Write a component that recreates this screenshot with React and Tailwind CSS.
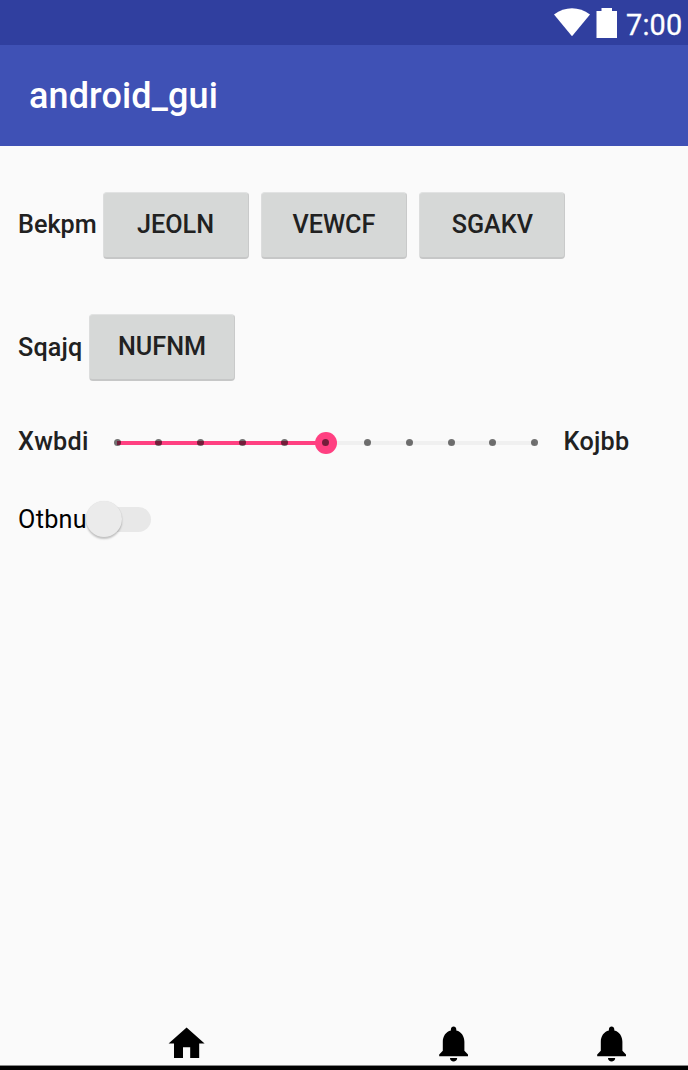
const TICKS = Array.from({ length: 11 }, (_, i) => i);

function RaisedButton({ children }) {
  return (
    <button className="h-[67px] w-[146px] shrink-0 rounded-[4px] border border-t-[#e2e3e3] border-r-[#c9caca] border-b-2 border-l-[#dcdddd] border-b-[#c6c7c7] bg-[#d6d8d7] text-center font-medium leading-[64px]">
      {children}
    </button>
  );
}

function Slider() {
  return (
    <div className="relative flex h-[22px] w-[424.5px] items-center">
      <div className="mx-[3.5px] h-[4px] w-[417.5px] bg-[#f0f0f0]">
        <div className="h-full w-1/2 bg-[#ff4081]" />
      </div>
      <div className="absolute left-[201.25px] top-0 size-[22px] rounded-full bg-[#ff4081]" />
      <div className="absolute inset-0 flex items-center justify-between">
        {TICKS.map((tick) => (
          <span key={tick} className="size-[7px] rounded-full bg-black/55" />
        ))}
      </div>
    </div>
  );
}

function Switch() {
  return (
    <div className="relative flex h-[37px] w-[65px] items-center">
      <div className="ml-[6px] h-[25px] w-[59px] rounded-full bg-[#e8e8e8]" />
      <div className="absolute left-0 top-0 size-[36px] rounded-full bg-[#ebebeb] shadow-[0_2px_2px_rgba(0,0,0,0.22),0_0_1px_rgba(0,0,0,0.12)]" />
    </div>
  );
}

function Bell() {
  return (
    <svg viewBox="0 0 24 24" className="size-[43.2px] shrink-0" fill="black">
      <path d="M12 22c1.1 0 2-.9 2-2h-4c0 1.1.89 2 2 2zm6-6v-5c0-3.07-1.64-5.64-4.5-6.32V4c0-.83-.67-1.5-1.5-1.5s-1.5.67-1.5 1.5v.68C7.63 5.36 6 7.92 6 11v5l-2 2v1h16v-1l-2-2z" />
    </svg>
  );
}

export default function App() {
  return (
    <div className="flex h-[1070px] w-[688px] flex-col overflow-hidden bg-[#fafafa] font-['Roboto',sans-serif] text-[25.2px] text-[#212121]">
      <header className="shrink-0 text-white">
        <div className="flex h-[45px] bg-[#303f9f] pl-[553px]">
          <svg viewBox="0 0 65 45" className="h-[45px] w-[65px] shrink-0" fill="white">
            <path d="M1 14.5C12 6 26 6 37 14.5L19 36.3Z" />
            <path d="M43.5 11H48.5V8H59V11H64V38H43.5Z" />
          </svg>
          <span className="ml-[8px] mt-[4px] text-[28.8px] leading-[42px] tracking-[0.2px] [-webkit-text-stroke:0.3px_white]">7:00</span>
        </div>
        <div className="flex h-[101px] items-center bg-[#3f51b5] pl-[29px] text-[36px] font-medium tracking-[0.12px]">
          <span>android_gui</span>
        </div>
      </header>

      <main className="flex-1 pl-[18px] pt-[46px]">
        <div className="flex h-[67px] items-center">
          <span className="w-[84.5px] pb-[2px] font-medium">Bekpm</span>
          <div className="flex gap-[12.4px]">
            <RaisedButton>JEOLN</RaisedButton>
            <RaisedButton>VEWCF</RaisedButton>
            <RaisedButton>SGAKV</RaisedButton>
          </div>
        </div>
        <div className="mt-[55px] flex h-[67px] items-center">
          <span className="w-[71px] font-medium tracking-[0.15px]">Sqajq</span>
          <RaisedButton>NUFNM</RaisedButton>
        </div>
        <div className="mt-[43px] flex h-[37px] items-center">
          <span className="w-[95.5px] pb-[2px] font-medium tracking-[0.25px]">Xwbdi</span>
          <Slider />
          <span className="ml-[25.5px] pb-[2px] font-medium tracking-[0.3px]">Kojbb</span>
        </div>
        <div className="mt-[40px] flex h-[37px] items-center">
          <span className="w-[68px] text-black tracking-[0.3px]">Otbnu</span>
          <Switch />
        </div>
      </main>

      <nav className="flex h-[44px] shrink-0 border-b border-[#888888] pl-[165.4px]">
        <svg viewBox="0 0 24 24" className="size-[43.2px] shrink-0" fill="black">
          <path d="M10 20v-6h4v6h5v-8h3L12 3 2 12h3v8z" />
        </svg>
        <div className="ml-[223.2px] flex gap-[115px]">
          <Bell />
          <Bell />
        </div>
      </nav>
      <div className="h-1 shrink-0 bg-black" />
    </div>
  );
}
